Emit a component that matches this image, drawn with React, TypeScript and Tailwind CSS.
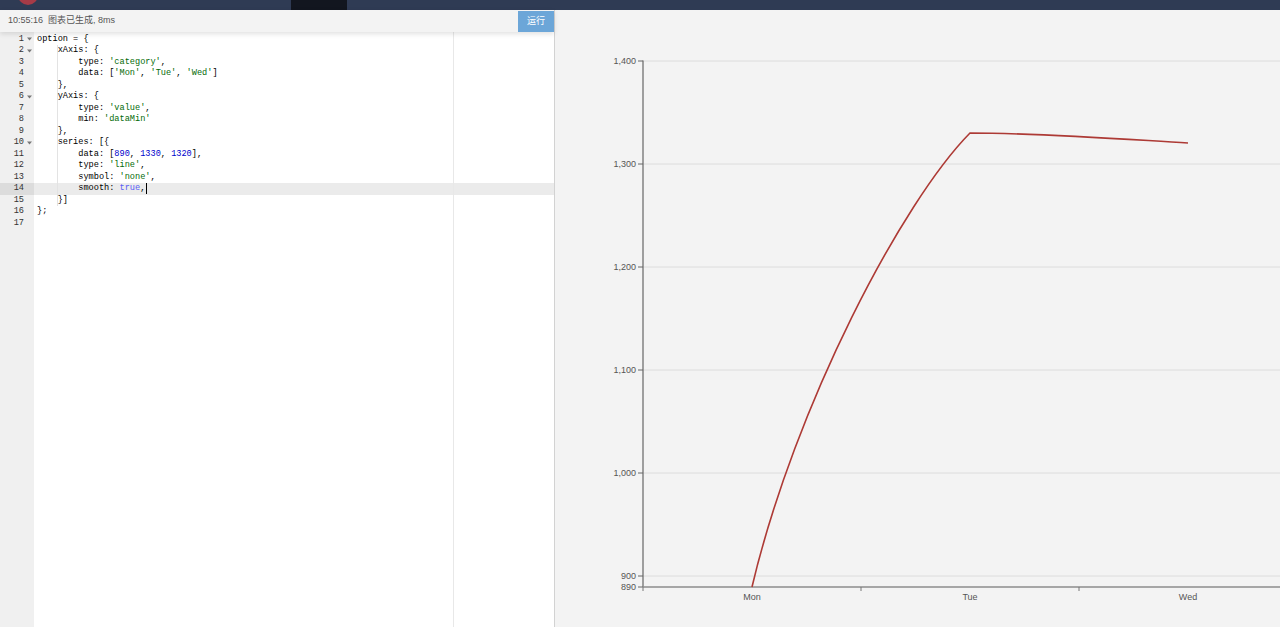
import React from "react";

type Tok = [string, string?];

const STR = "text-[#036a07]";
const NUM = "text-[#0000cd]";
const LANG = "text-[#585cf6]";

const lines: Tok[][] = [
	[["option = {"]],
	[["    xAxis: {"]],
	[["        type: "], ["'category'", STR], [","]],
	[["        data: ["], ["'Mon'", STR], [", "], ["'Tue'", STR], [", "], ["'Wed'", STR], ["]"]],
	[["    },"]],
	[["    yAxis: {"]],
	[["        type: "], ["'value'", STR], [","]],
	[["        min: "], ["'dataMin'", STR]],
	[["    },"]],
	[["    series: [{"]],
	[["        data: ["], ["890", NUM], [", "], ["1330", NUM], [", "], ["1320", NUM], ["],"]],
	[["        type: "], ["'line'", STR], [","]],
	[["        symbol: "], ["'none'", STR], [","]],
	[["        smooth: "], ["true", LANG], [","]],
	[["    }]"]],
	[["};"]],
	[],
];

const folds = [1, 2, 6, 10];
const ACTIVE = 14;

const yTicks = [
	{ v: "1,400", y: 61 },
	{ v: "1,300", y: 164 },
	{ v: "1,200", y: 267 },
	{ v: "1,100", y: 370 },
	{ v: "1,000", y: 473 },
	{ v: "900", y: 576 },
];

const CodeLine = ({ toks, active }: { toks: Tok[]; active: boolean }) => {
	// split leading indentation into 4-space chunks for indent guides
	const first = toks[0]?.[0] ?? "";
	const indent = first.length - first.trimStart().length;
	const chunks = Math.floor(indent / 4);
	const rest: Tok[] = toks.length
		? [[first.slice(indent), toks[0][1]], ...toks.slice(1)]
		: [];
	return (
		<div
			className={`h-[11.5px] pl-[3px] whitespace-pre ${
				active ? "bg-[#ebebeb]" : ""
			}`}>
			{Array.from({ length: chunks }).map((_, i) => (
				<span
					key={i}
					className={`inline-block w-[4ch] h-[11.5px] align-top ${
						i === 0 ? "shadow-[inset_-1px_0_0_#e3e3e3]" : ""
					}`}
				/>
			))}
			{rest.map(([t, c], i) => (
				<span key={i} className={c || "text-black"}>
					{t}
				</span>
			))}
			{active && (
				<span className="inline-block w-[1px] h-[11px] bg-black align-top ml-[1px]" />
			)}
		</div>
	);
};

const Chart = () => (
	<svg
		className="block w-full h-full"
		viewBox="555 10 725 617"
		preserveAspectRatio="none">
		{yTicks.map((t) => (
			<g key={t.v}>
				<line x1={643} x2={1297} y1={t.y} y2={t.y} stroke="#dcdcdc" strokeWidth={1} />
				<line x1={638} x2={643} y1={t.y} y2={t.y} stroke="#666" strokeWidth={1} />
				<text
					x={636}
					y={t.y + 3.2}
					textAnchor="end"
					fontSize={9}
					fill="#555"
					fontFamily="'Liberation Sans', Arial, sans-serif">
					{t.v}
				</text>
			</g>
		))}
		<line x1={638} x2={643} y1={587} y2={587} stroke="#666" strokeWidth={1} />
		<text
			x={636}
			y={590.2}
			textAnchor="end"
			fontSize={9}
			fill="#555"
			fontFamily="'Liberation Sans', Arial, sans-serif">
			890
		</text>
		<line x1={643} x2={643} y1={60.5} y2={587} stroke="#666" strokeWidth={1.2} />
		<line x1={643} x2={1297} y1={587} y2={587} stroke="#8c8c8c" strokeWidth={1.5} />
		{[643, 861, 1079].map((x) => (
			<line key={x} x1={x} x2={x} y1={587} y2={591} stroke="#777" strokeWidth={1} />
		))}
		{[
			["Mon", 752],
			["Tue", 970],
			["Wed", 1188],
		].map(([l, x]) => (
			<text
				key={l}
				x={x}
				y={600}
				textAnchor="middle"
				fontSize={9}
				fill="#555"
				fontFamily="'Liberation Sans', Arial, sans-serif">
				{l}
			</text>
		))}
		<path
			d="M752 587 C795 405 902 202 970 133 C1040 133 1120 139 1188 143"
			fill="none"
			stroke="#ad3a35"
			strokeWidth={1.6}
		/>
	</svg>
);

export default function App() {
	return (
		<div className="w-[1280px] h-[627px] overflow-hidden flex flex-col bg-[#f3f3f3] font-['Liberation_Sans','Noto_Sans_CJK_SC',sans-serif]">
			{/* top nav strip */}
			<div className="h-[10px] shrink-0 bg-[#2f3b54] relative overflow-hidden">
				<div className="absolute left-[18px] top-[-15px] w-[20px] h-[20px] rounded-full bg-[#a63b47]" />
				<div className="absolute left-[291px] top-0 w-[56px] h-[10px] bg-[#12161f]" />
			</div>

			<div className="flex flex-1 min-h-0">
				{/* editor side */}
				<div className="w-[555px] shrink-0 border-r border-[#d2d2d2] flex flex-col bg-white">
					<div className="h-[22px] shrink-0 flex items-center justify-between bg-[#f3f3f3] shadow-[0_2px_5px_rgba(0,0,0,0.12)] relative z-10">
						<span className="pl-[8px] text-[9px] text-[#555]">
							10:55:16&nbsp;&nbsp;图表已生成, 8ms
						</span>
						<button className="self-end h-[21px] w-[36px] bg-[#6ca6d8] text-white text-[9px] flex items-center justify-center">
							运行
						</button>
					</div>
					<div className="flex flex-1 min-h-0 font-['Liberation_Mono',monospace] text-[8.6px] leading-[11.5px]">
						<div className="w-[34px] shrink-0 bg-[#f0f0f0] text-[#333] pt-[1.5px]">
							{lines.map((_, i) => (
								<div
									key={i}
									className={`h-[11.5px] flex items-center justify-end ${
										i + 1 === ACTIVE ? "bg-[#dcdcdc]" : ""
									}`}>
									<span>{i + 1}</span>
									<span className="w-[10px] h-[11.5px] flex items-center justify-center">
										{folds.includes(i + 1) && (
											<svg width="5" height="4" viewBox="0 0 5 4">
												<path d="M0 0.5 L5 0.5 L2.5 3.5 Z" fill="#777" />
											</svg>
										)}
									</span>
								</div>
							))}
						</div>
						<div className="flex-1 relative pt-[1.5px]">
							<div className="absolute left-[419px] top-0 bottom-0 w-[1px] bg-[#e8e8e8]" />
							{lines.map((toks, i) => (
								<CodeLine key={i} toks={toks} active={i + 1 === ACTIVE} />
							))}
						</div>
					</div>
				</div>

				{/* chart side */}
				<div className="flex-1 min-w-0 bg-[#f3f3f3]">
					<Chart />
				</div>
			</div>
		</div>
	);
}
